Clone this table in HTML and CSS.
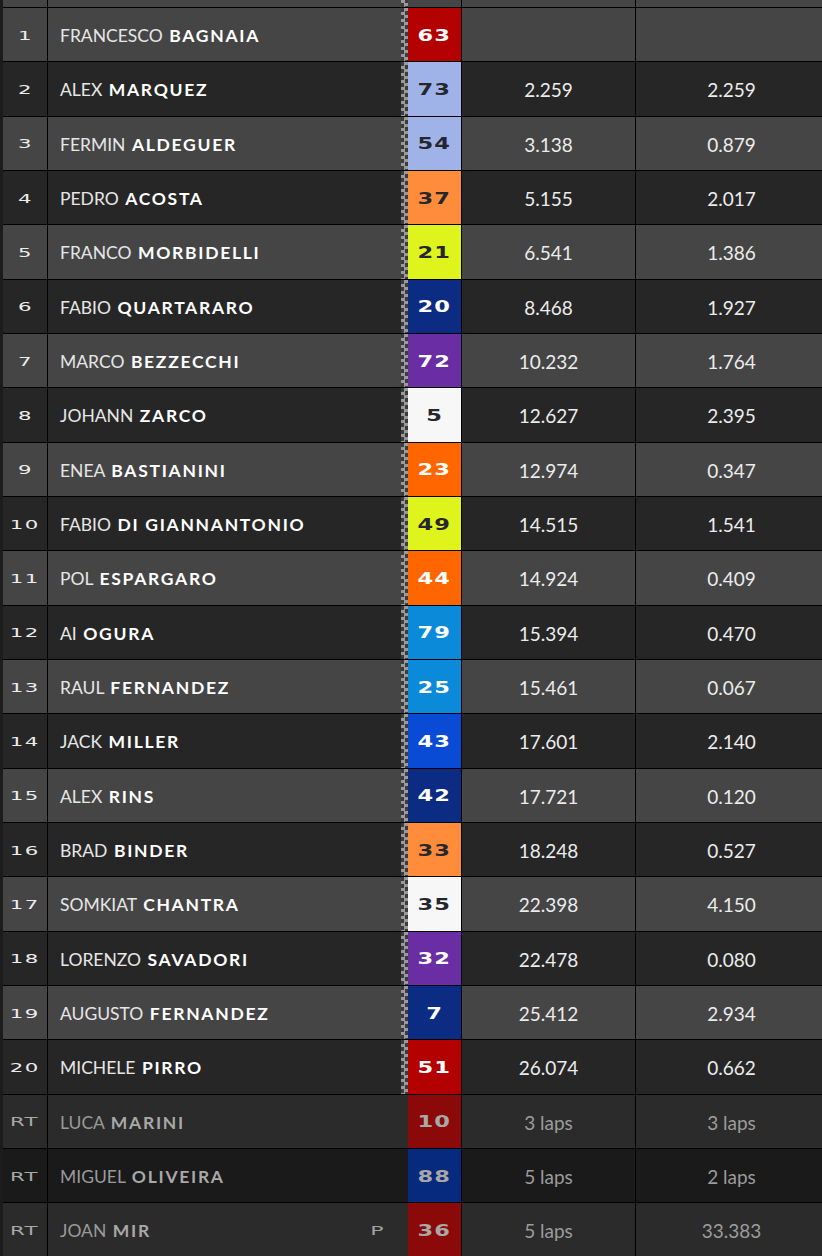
FILE: index.html
```html
<!DOCTYPE html>
<html>
<head>
<meta charset="utf-8">
<link rel="stylesheet" href="styles.css">
</head>
<body>
<div class="table">
  <div class="row head"><div class="pos"></div><div class="name"></div><div class="flag"></div><div class="num"></div><div class="gap"></div><div class="gap last"></div></div>

  <div class="row odd"><div class="pos"><span>1</span></div><div class="name">FRANCESCO <b>BAGNAIA</b></div><div class="flag"></div><div class="num c-red"><span>63</span></div><div class="gap"></div><div class="gap last"></div></div>
  <div class="row even"><div class="pos"><span>2</span></div><div class="name">ALEX <b>MARQUEZ</b></div><div class="flag"></div><div class="num c-lblue"><span>73</span></div><div class="gap">2.259</div><div class="gap last">2.259</div></div>
  <div class="row odd"><div class="pos"><span>3</span></div><div class="name">FERMIN <b>ALDEGUER</b></div><div class="flag"></div><div class="num c-lblue"><span>54</span></div><div class="gap">3.138</div><div class="gap last">0.879</div></div>
  <div class="row even"><div class="pos"><span>4</span></div><div class="name">PEDRO <b>ACOSTA</b></div><div class="flag"></div><div class="num c-lorange"><span>37</span></div><div class="gap">5.155</div><div class="gap last">2.017</div></div>
  <div class="row odd"><div class="pos"><span>5</span></div><div class="name">FRANCO <b>MORBIDELLI</b></div><div class="flag"></div><div class="num c-lime"><span>21</span></div><div class="gap">6.541</div><div class="gap last">1.386</div></div>
  <div class="row even"><div class="pos"><span>6</span></div><div class="name">FABIO <b>QUARTARARO</b></div><div class="flag"></div><div class="num c-navy"><span>20</span></div><div class="gap">8.468</div><div class="gap last">1.927</div></div>
  <div class="row odd"><div class="pos"><span>7</span></div><div class="name">MARCO <b>BEZZECCHI</b></div><div class="flag"></div><div class="num c-purple"><span>72</span></div><div class="gap">10.232</div><div class="gap last">1.764</div></div>
  <div class="row even"><div class="pos"><span>8</span></div><div class="name">JOHANN <b>ZARCO</b></div><div class="flag"></div><div class="num c-white"><span>5</span></div><div class="gap">12.627</div><div class="gap last">2.395</div></div>
  <div class="row odd"><div class="pos"><span>9</span></div><div class="name">ENEA <b>BASTIANINI</b></div><div class="flag"></div><div class="num c-orange"><span>23</span></div><div class="gap">12.974</div><div class="gap last">0.347</div></div>
  <div class="row even"><div class="pos"><span>10</span></div><div class="name">FABIO <b>DI GIANNANTONIO</b></div><div class="flag"></div><div class="num c-lime"><span>49</span></div><div class="gap">14.515</div><div class="gap last">1.541</div></div>
  <div class="row odd"><div class="pos"><span>11</span></div><div class="name">POL <b>ESPARGARO</b></div><div class="flag"></div><div class="num c-orange"><span>44</span></div><div class="gap">14.924</div><div class="gap last">0.409</div></div>
  <div class="row even"><div class="pos"><span>12</span></div><div class="name">AI <b>OGURA</b></div><div class="flag"></div><div class="num c-sky"><span>79</span></div><div class="gap">15.394</div><div class="gap last">0.470</div></div>
  <div class="row odd"><div class="pos"><span>13</span></div><div class="name">RAUL <b>FERNANDEZ</b></div><div class="flag"></div><div class="num c-sky"><span>25</span></div><div class="gap">15.461</div><div class="gap last">0.067</div></div>
  <div class="row even"><div class="pos"><span>14</span></div><div class="name">JACK <b>MILLER</b></div><div class="flag"></div><div class="num c-blue"><span>43</span></div><div class="gap">17.601</div><div class="gap last">2.140</div></div>
  <div class="row odd"><div class="pos"><span>15</span></div><div class="name">ALEX <b>RINS</b></div><div class="flag"></div><div class="num c-navy"><span>42</span></div><div class="gap">17.721</div><div class="gap last">0.120</div></div>
  <div class="row even"><div class="pos"><span>16</span></div><div class="name">BRAD <b>BINDER</b></div><div class="flag"></div><div class="num c-lorange"><span>33</span></div><div class="gap">18.248</div><div class="gap last">0.527</div></div>
  <div class="row odd"><div class="pos"><span>17</span></div><div class="name">SOMKIAT <b>CHANTRA</b></div><div class="flag"></div><div class="num c-white"><span>35</span></div><div class="gap">22.398</div><div class="gap last">4.150</div></div>
  <div class="row even"><div class="pos"><span>18</span></div><div class="name">LORENZO <b>SAVADORI</b></div><div class="flag"></div><div class="num c-purple"><span>32</span></div><div class="gap">22.478</div><div class="gap last">0.080</div></div>
  <div class="row odd"><div class="pos"><span>19</span></div><div class="name">AUGUSTO <b>FERNANDEZ</b></div><div class="flag"></div><div class="num c-navy"><span>7</span></div><div class="gap">25.412</div><div class="gap last">2.934</div></div>
  <div class="row even"><div class="pos"><span>20</span></div><div class="name">MICHELE <b>PIRRO</b></div><div class="flag"></div><div class="num c-red"><span>51</span></div><div class="gap">26.074</div><div class="gap last">0.662</div></div>

  <div class="row rt rt-a"><div class="pos"><span>RT</span></div><div class="name">LUCA <b>MARINI</b></div><div class="noflag"></div><div class="num c-dred"><span>10</span></div><div class="gap">3 laps</div><div class="gap last">3 laps</div></div>
  <div class="row rt rt-b"><div class="pos"><span>RT</span></div><div class="name">MIGUEL <b>OLIVEIRA</b></div><div class="noflag"></div><div class="num c-dnavy"><span>88</span></div><div class="gap">5 laps</div><div class="gap last">2 laps</div></div>
  <div class="row rt rt-a"><div class="pos"><span>RT</span></div><div class="name">JOAN <b>MIR</b><span class="pen"><span>P</span></span></div><div class="noflag"></div><div class="num c-dred"><span>36</span></div><div class="gap">5 laps</div><div class="gap last">33.383</div></div>
</div>
</body>
</html>
```

FILE: styles.css
```css
html, body {
  margin: 0;
  padding: 0;
  background: #1c1c1c;
  overflow: hidden;
}

.table {
  display: flex;
  flex-direction: column;
  gap: 1px;
  background: #000;
  margin-left: 3px;
  width: 819px;
  height: 1256px;
}

.row {
  display: grid;
  grid-template-columns: 45px 353px 7px 53px 174px 187px;
  height: 53.33px;
  flex: none;
}

.row.head {
  height: 7px;
  background: #454545;
}

.odd { background: #454545; }
.even { background: #262626; }
.rt-a { background: #2b2b2b; }
.rt-b { background: #1a1a1a; }

.pos {
  border-right: 1px solid #000;
  display: flex;
  align-items: center;
  justify-content: center;
  color: #ececec;
  font-family: "DejaVu Sans", sans-serif;
  font-size: 12.5px;
  letter-spacing: 0.8px;
  padding-top: 1px;
}

.pos span,
.num span,
.pen span {
  display: inline-block;
  transform: scaleX(1.7);
}

.name {
  display: flex;
  align-items: center;
  padding-left: 12px;
  padding-top: 2px;
  font-family: Lato, "Open Sans", sans-serif;
  font-size: 17.5px;
  color: #e6e6e6;
  white-space: pre;
  word-spacing: 2px;
}

.name b {
  font-weight: 700;
  color: #fff;
  letter-spacing: 1.7px;
  word-spacing: 0;
}

.flag {
  background: repeating-conic-gradient(#9a9a9a 0 25%, #3c3c3c 0 50%) 0 0 / 7px 7px;
}

.head .flag {
  background-position: 0 -4px;
}

.num {
  display: flex;
  align-items: center;
  justify-content: center;
  font-family: "DejaVu Sans", sans-serif;
  font-weight: 700;
  font-size: 15px;
  letter-spacing: 0.8px;
  padding-top: 2px;
}

.num span { transform: scaleX(1.5); }

.gap {
  border-left: 1px solid #000;
  display: flex;
  align-items: center;
  justify-content: center;
  font-family: Lato, "Open Sans", sans-serif;
  font-size: 19px;
  color: #ececec;
  padding-top: 2px;
}

.gap.last {
  padding-left: 5px;
}

.rt .pos { color: #a8a8a8; }
.rt .name { color: #9a9a9a; }
.rt .name b { color: #a8a8a8; }
.rt .gap { color: #9c9c9c; }
.rt .num { color: #a8a8a8; }

.pen {
  margin-left: auto;
  margin-right: 20px;
  font-family: "DejaVu Sans", sans-serif;
  font-size: 13px;
  color: #a0a0a0;
}

.c-red { background: #b30000; color: #fff; }
.c-lblue { background: #9fb3e8; color: #26262e; }
.c-lorange { background: #ff8c3a; color: #26262e; }
.c-lime { background: #def41c; color: #26262e; }
.c-navy { background: #0b2c82; color: #fff; }
.c-purple { background: #6b2da3; color: #fff; }
.c-white { background: #f7f7f7; color: #26262e; }
.c-orange { background: #ff6600; color: #fff; }
.c-sky { background: #0b8ad9; color: #fff; }
.c-blue { background: #0a4bd6; color: #fff; }
.c-dred { background: #8c0909; }
.c-dnavy { background: #062a7e; }
```
